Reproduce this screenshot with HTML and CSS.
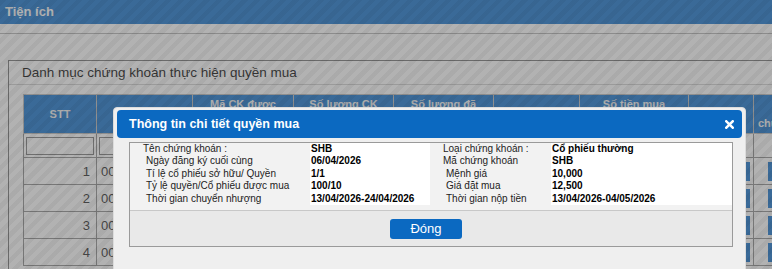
FILE: index.html
```html
<!DOCTYPE html>
<html lang="vi">
<head>
  <meta charset="UTF-8" />
  <title>Tiện ích</title>
  <link rel="stylesheet" href="styles.css">
</head>
<body>
  <div class="topbar">Tiện ích</div>
  <div class="toolbar"></div>

  <div class="panel">
    <div class="panel-title">Danh mục chứng khoán thực hiện quyền mua</div>
    <table class="grid">
      <colgroup>
        <col style="width:73px"><col style="width:96px"><col style="width:101px">
        <col style="width:100px"><col style="width:100px"><col style="width:86px">
        <col style="width:109px"><col style="width:65px"><col style="width:93px">
      </colgroup>
      <tr class="head">
        <th>STT</th>
        <th>Tài khoản</th>
        <th>Mã CK được<br>phân bổ</th>
        <th>Số lượng CK<br>được mua</th>
        <th>Số lượng đã<br>đăng ký</th>
        <th>Giá mua</th>
        <th>Số tiền mua<br>phải nộp</th>
        <th></th>
        <th>Trạng thái<br>chuyển nhượng</th>
      </tr>
      <tr class="filter">
        <td><span class="box"></span></td>
        <td><span class="box"></span></td>
        <td></td><td></td><td></td><td></td><td></td><td></td><td></td>
      </tr>
      <tr class="row">
        <td class="num">1</td><td>0001</td><td></td><td></td><td></td><td></td><td></td>
        <td class="act"><span class="btn"></span></td><td class="act2"><span class="btn"></span></td>
      </tr>
      <tr class="row">
        <td class="num">2</td><td>0001</td><td></td><td></td><td></td><td></td><td></td>
        <td class="act"><span class="btn"></span></td><td class="act2"><span class="btn"></span></td>
      </tr>
      <tr class="row">
        <td class="num">3</td><td>0001</td><td></td><td></td><td></td><td></td><td></td>
        <td class="act"><span class="btn"></span></td><td class="act2"><span class="btn"></span></td>
      </tr>
      <tr class="row">
        <td class="num">4</td><td>0001</td><td></td><td></td><td></td><td></td><td></td>
        <td class="act"><span class="btn"></span></td><td class="act2"><span class="btn"></span></td>
      </tr>
    </table>
  </div>

  <div class="overlay"></div>

  <div class="dialog">
    <div class="dialog-title">
      <span>Thông tin chi tiết quyền mua</span>
      <svg class="close" width="9" height="9" viewBox="0 0 9 9">
        <path d="M1.3 1.3 L7.7 7.7 M7.7 1.3 L1.3 7.7" stroke="#fff" stroke-width="2.5" stroke-linecap="square"/>
      </svg>
    </div>
    <div class="detail">
      <div class="info">
        <div class="lbl first">Tên chứng khoán :</div>
        <div class="val">SHB</div>
        <div class="lbl first">Loại chứng khoán :</div>
        <div class="val">Cổ phiếu thường</div>

        <div class="lbl">Ngày đăng ký cuối cùng</div>
        <div class="val">06/04/2026</div>
        <div class="lbl first">Mã chứng khoán</div>
        <div class="val">SHB</div>

        <div class="lbl">Tí lệ cổ phiếu sở hữu/ Quyền</div>
        <div class="val">1/1</div>
        <div class="lbl">Mệnh giá</div>
        <div class="val">10,000</div>

        <div class="lbl">Tỷ lệ quyền/Cổ phiếu được mua</div>
        <div class="val">100/10</div>
        <div class="lbl">Giá đặt mua</div>
        <div class="val">12,500</div>

        <div class="lbl">Thời gian chuyển nhượng</div>
        <div class="val">13/04/2026-24/04/2026</div>
        <div class="lbl">Thời gian nộp tiền</div>
        <div class="val">13/04/2026-04/05/2026</div>
      </div>
      <div class="actions">
        <button class="close-btn">Đóng</button>
      </div>
    </div>
  </div>
</body>
</html>
```

FILE: styles.css
```css
* {
  box-sizing: border-box;
  margin: 0;
  padding: 0;
}

body {
  font-family: "Liberation Sans", Arial, sans-serif;
  background: #fff;
  color: #000;
  width: 772px;
  height: 269px;
  overflow: hidden;
  position: relative;
}

.topbar {
  height: 24px;
  background: #0e6eca;
  color: #fff;
  font-size: 13px;
  font-weight: bold;
  line-height: 24px;
  padding-left: 5px;
}

.toolbar {
  height: 10px;
  border-bottom: 1px solid #b0b0b0;
  margin-bottom: 26px;
}

.panel {
  margin-left: 8px;
  width: 900px;
  height: 260px;
  border: 1px solid #6e6e6e;
}

.panel-title {
  height: 24px;
  line-height: 23px;
  padding-left: 13px;
  font-size: 13.5px;
  border-bottom: 1px solid #cfcfcf;
}

.grid {
  margin: 9px 0 0 14px;
  border-collapse: collapse;
  table-layout: fixed;
  width: 823px;
}

.grid th,
.grid td {
  border: 1px solid #888;
}

.head th {
  height: 39px;
  background: #0e6eca;
  color: #f2f2f2;
  font-size: 11px;
  line-height: 19px;
  font-weight: bold;
  border-color: #b8b8b8;
}

.filter td {
  height: 24px;
  padding: 0 2px;
}

.box {
  display: block;
  height: 18px;
  border: 1px solid #777;
  background: #fff;
}

.row td {
  height: 27px;
  font-size: 13px;
  color: #222;
  padding: 0 4px;
}

.row td.num {
  text-align: right;
  padding-right: 6px;
}

.btn {
  display: inline-block;
  width: 20px;
  height: 19px;
  vertical-align: middle;
  background: #0e6eca;
}

.act {
  text-align: right;
}

.row td.act {
  padding-right: 3px;
}

.row td.act2 {
  padding-left: 14px;
}

.overlay {
  position: absolute;
  inset: 0;
  background-color: rgba(102, 102, 102, 0.5);
  background-image: repeating-linear-gradient(135deg, rgba(0, 0, 0, 0.045) 0 4.5px, transparent 4.5px 9px);
}

.dialog {
  position: absolute;
  left: 113px;
  top: 107px;
  width: 633px;
  height: 180px;
  padding: 2px 3px;
  background: #efefef;
  border: 1px solid #dcdcdc;
  border-radius: 4px;
}

.dialog-title {
  height: 28px;
  background: #0b69c1;
  border-radius: 4px;
  color: #fff;
  font-size: 12.5px;
  font-weight: bold;
  padding: 0 8px 0 12px;
  display: flex;
  align-items: center;
  justify-content: space-between;
}

.close {
  display: block;
}

.detail {
  margin: 4px 0 0 12px;
  width: 604px;
  border: 1px solid #9a9a9a;
  background: #e9e9e9;
}

.info {
  display: grid;
  grid-template-columns: 180px 120px 121px 181px;
  grid-auto-rows: 12.4px;
  background: #f2f2f2;
  padding-bottom: 5px;
  border-bottom: 1px solid #c8c8c8;
  font-size: 10px;
  line-height: 12.4px;
  white-space: nowrap;
}

.lbl {
  padding-left: 16px;
  color: #222;
}

.lbl.first {
  padding-left: 13px;
}

.val {
  background: #fff;
  font-weight: bold;
  padding-left: 1px;
}

.actions {
  height: 35px;
  padding: 8px 10px 0 0;
  display: flex;
  justify-content: center;
}

.close-btn {
  width: 72px;
  height: 20px;
  background: #0b69c1;
  color: #fff;
  border: none;
  border-radius: 3px;
  font-family: "Liberation Sans", Arial, sans-serif;
  font-size: 13px;
}
```
